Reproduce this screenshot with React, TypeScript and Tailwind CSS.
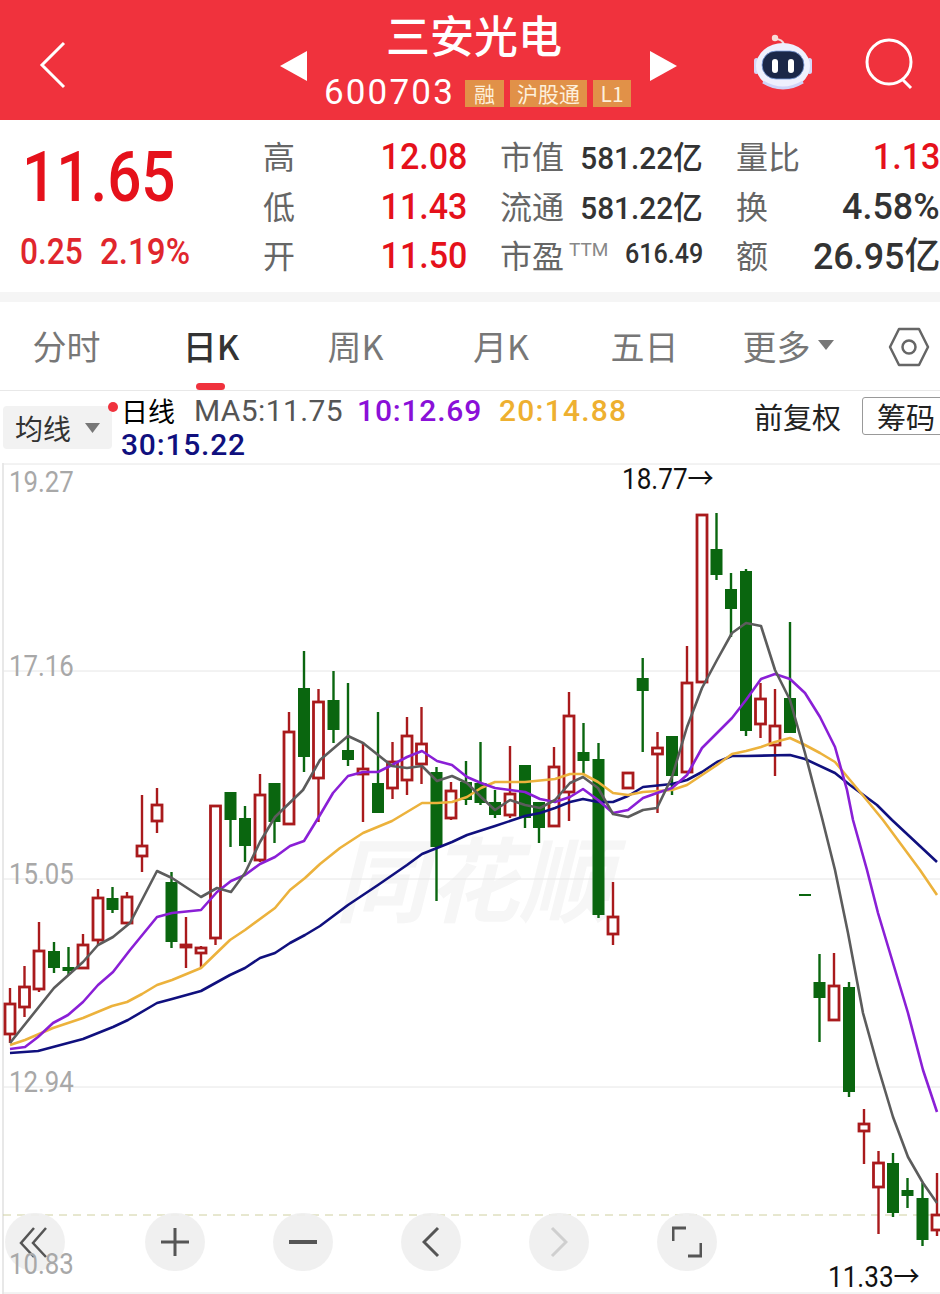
import React from "react";

type C = [number, number, number, number, number, "r" | "g"];
const candles: C[] = [
  [10, 988, 1043, 1004, 1034, "r"], [24.5, 966, 1017, 987, 1007, "r"], [39, 922, 992, 951, 989, "r"], [54, 942, 973, 951, 968, "g"],
  [68.5, 947, 975, 967, 971, "g"], [83, 934, 968, 945, 968, "r"], [98, 889, 945, 898, 940, "r"], [112.5, 887, 913, 898, 910, "g"],
  [127, 892, 923, 897, 923, "r"], [142, 795, 872, 846, 856, "r"], [157, 788, 833, 805, 821, "r"], [171.5, 872, 948, 882, 942, "g"],
  [186, 917, 968, 945, 947, "r"], [201, 946, 968, 948, 953, "r"], [215.5, 806, 945, 806, 938, "r"], [230.5, 792, 847, 792, 820, "g"],
  [245, 806, 862, 818, 846, "g"], [260, 774, 862, 795, 860, "r"], [274.5, 783, 843, 783, 822, "g"], [289, 712, 824, 732, 824, "r"],
  [304, 651, 772, 688, 757, "g"], [318.5, 689, 822, 702, 778, "r"], [333.5, 671, 743, 700, 730, "g"], [348, 683, 766, 750, 760, "g"],
  [363, 742, 822, 769, 774, "r"], [378, 712, 813, 783, 813, "g"], [392.5, 742, 799, 762, 788, "r"], [407, 717, 795, 736, 780, "r"],
  [421.5, 707, 784, 744, 764, "r"], [436.5, 767, 901, 772, 847, "g"], [451, 782, 820, 791, 818, "r"], [466, 761, 805, 782, 800, "g"],
  [480.5, 742, 805, 783, 803, "g"], [495, 790, 818, 802, 815, "g"], [510, 746, 818, 794, 815, "r"], [525, 765, 828, 765, 818, "g"],
  [539, 802, 843, 802, 828, "g"], [554, 747, 826, 767, 826, "r"], [569, 692, 821, 716, 792, "r"], [583.5, 723, 774, 752, 761, "g"],
  [598.5, 743, 918, 759, 915, "g"], [613, 882, 945, 917, 934, "r"], [628, 773, 788, 773, 788, "r"], [642.7, 658, 752, 678, 691, "g"],
  [657.5, 732, 813, 748, 754, "r"], [672, 736, 795, 736, 776, "g"], [687, 646, 772, 683, 772, "r"], [702, 515, 682, 515, 682, "r"],
  [716.5, 513, 580, 549, 575, "g"], [731, 573, 637, 589, 609, "g"], [746, 569, 736, 571, 731, "g"], [760.5, 683, 738, 699, 724, "r"],
  [775, 689, 776, 726, 745, "r"], [790, 622, 733, 698, 733, "g"], [805, 894, 896, 894, 896, "g"], [819.5, 954, 1042, 982, 998, "g"],
  [834, 953, 1020, 986, 1020, "r"], [849, 982, 1097, 987, 1092, "g"], [864, 1109, 1164, 1124, 1131, "r"], [878.5, 1151, 1234, 1163, 1187, "r"],
  [893, 1153, 1217, 1163, 1213, "g"], [907.5, 1178, 1208, 1190, 1196, "g"], [922.5, 1183, 1246, 1198, 1240, "g"], [937, 1173, 1236, 1215, 1230, "r"],
];

const ma5 = "10,1043 54,988 83,962 98,945 113,937 130,923 157,871 172,878 201,897 217,888 231,892 245,873 260,842 275,817 303,790 320,760 348,736 363,743 392,766 407,768 422,766 437,781 452,776 467,783 481,797 495,810 510,800 525,805 540,808 555,800 570,783 583,777 598,788 613,814 628,817 643,810 657,808 672,777 687,727 702,688 717,660 732,633 746,623 761,626 775,670 790,700 805,753 822,818 835,870 848,933 863,1013 878,1067 893,1117 908,1157 923,1183 937,1203";
const ma10 = "10,1049 25,1047 38,1037 53,1023 68,1015 83,1002 98,985 113,972 130,950 157,917 172,913 201,910 217,892 231,881 245,875 260,864 275,857 290,846 304,841 320,815 333,793 348,776 363,772 378,772 392,765 407,757 422,751 437,761 452,765 467,777 481,783 495,788 510,790 525,792 540,799 555,802 570,797 583,789 598,800 613,813 628,810 643,798 657,793 672,788 687,775 702,748 717,733 732,718 746,700 761,679 775,674 790,679 805,693 820,717 835,747 847,790 853,820 867,870 878,913 893,963 908,1013 923,1070 937,1112";
const ma20 = "10,1045 25,1040 53,1028 83,1018 112,1006 127,1002 142,994 157,985 172,980 201,968 230,940 245,930 275,908 290,890 305,878 320,864 340,848 363,833 392,821 422,803 437,803 452,802 467,797 481,788 495,782 525,782 555,779 570,774 583,774 598,782 613,793 628,795 643,792 672,790 687,785 702,775 717,765 732,754 746,751 761,747 775,742 790,738 805,745 820,753 835,762 850,780 865,798 883,820 920,870 937,895";
const ma30 = "10,1053 38,1051 53,1047 83,1039 113,1027 128,1020 157,1003 172,999 201,991 230,975 245,968 260,958 275,953 290,943 305,935 320,926 348,905 378,885 407,865 422,854 452,842 467,835 495,826 525,816 540,813 555,808 570,802 583,799 598,802 613,802 628,796 643,787 672,784 687,780 702,772 717,762 732,756 746,756 790,755 805,759 835,773 850,785 877,805 892,820 937,862";

const roboto = "font-['Roboto',sans-serif]";
const cjk = "font-['Noto_Sans_CJK_SC',sans-serif]";

function Chart() {
  return (
    <svg className="block relative" width={940} height={831} viewBox="0 463 940 831">
      <rect x={2} y={463} width={2} height={831} fill="#e8e8e8" />
      {[464, 671, 879, 1087, 1293].map((y) => (
        <line key={y} x1={3} x2={940} y1={y} y2={y} stroke="#e6e6e6" strokeWidth={1} />
      ))}
      <line x1={3} x2={940} y1={1215} y2={1215} stroke="#cfd0a0" strokeWidth={1} strokeDasharray="8 6" />
      {candles.map(([x, wt, wb, bt, bb, c], i) => {
        const col = c === "r" ? "#a91a1c" : "#0a660f";
        return (
          <g key={i}>
            <line x1={x} x2={x} y1={wt} y2={bt} stroke={col} strokeWidth={2.4} />
            <line x1={x} x2={x} y1={bb} y2={wb} stroke={col} strokeWidth={2.4} />
            {c === "r" ? (
              <rect x={x - 5} y={bt} width={10} height={bb - bt} fill="#fff" stroke={col} strokeWidth={2.8} />
            ) : (
              <rect x={x - 6} y={bt} width={12} height={bb - bt} fill={col} />
            )}
          </g>
        );
      })}
      <polyline points={ma30} fill="none" stroke="#10107e" strokeWidth={2.6} strokeLinejoin="round" />
      <polyline points={ma20} fill="none" stroke="#ecb23c" strokeWidth={2.6} strokeLinejoin="round" />
      <polyline points={ma10} fill="none" stroke="#8a1fd6" strokeWidth={2.6} strokeLinejoin="round" />
      <polyline points={ma5} fill="none" stroke="#5c5c5c" strokeWidth={2.6} strokeLinejoin="round" />
    </svg>
  );
}

function Robot() {
  return (
    <svg width={60} height={58} viewBox="0 0 60 58" className="shrink-0">
      <path d="M22 5 C26 5 30 6 31 11" fill="none" stroke="#f3dada" strokeWidth={2} />
      <circle cx={22} cy={4} r={3.2} fill="#f8dcd8" />
      <rect x={1} y={24} width={5} height={16} rx={2.5} fill="#d5d8f8" />
      <rect x={54} y={24} width={5} height={16} rx={2.5} fill="#d5d8f8" />
      <ellipse cx={30} cy={32} rx={27} ry={23} fill="#eef0fd" />
      <path d="M10 48 Q30 60 50 48" fill="none" stroke="#cfd4f8" strokeWidth={3} />
      <rect x={9} y={17} width={42} height={28} rx={14} fill="#1b2748" stroke="#7fa0e0" strokeWidth={0.8} />
      <rect x={19} y={25} width={6} height={14} rx={3} fill="#fff" />
      <rect x={35} y={25} width={6} height={14} rx={3} fill="#fff" />
    </svg>
  );
}

function Btn({ children, extra = "" }: { children: React.ReactNode; extra?: string }) {
  return <div className={`w-[60px] h-[58px] rounded-full bg-[#eeeeee]/90 flex items-center justify-center shrink-0 ${extra}`}>{children}</div>;
}

function Badge({ children, w }: { children: React.ReactNode; w: string }) {
  return (
    <span className={`${w} h-[27px] bg-[#e19148] text-[#fdf0dc] text-[21px] leading-[27px] text-center ${cjk}`}>{children}</span>
  );
}

const redVal = `${roboto} text-[37px] font-medium text-[#e5111b] origin-right scale-x-[0.92] leading-[54px] whitespace-nowrap`;
const darkVal = `${roboto} text-[37px] font-medium text-[#333333] origin-right scale-x-[0.97] leading-[54px] whitespace-nowrap`;
const midVal = `${roboto} text-[32px] font-medium text-[#333333] origin-right scale-x-[0.93] leading-[54px] whitespace-nowrap -mt-[2px]`;
const axisLabel = `${roboto} absolute left-[9px] text-[30px] leading-[34px] text-[#a8a8a8] origin-left scale-x-[0.86]`;

export default function App() {
  return (
    <div className={`w-[940px] h-[1294px] overflow-hidden bg-white ${cjk}`}>
      <header className="h-[120px] bg-[#f0323d] flex items-center relative text-white">
        <svg width={30} height={50} viewBox="0 0 30 50" className="ml-[38px] shrink-0 mt-[10px]">
          <path d="M26 3 L4 25 L26 47" fill="none" stroke="#fff" strokeWidth={3} />
        </svg>
        <svg width={30} height={32} viewBox="0 0 30 32" className="ml-[211px] shrink-0 mt-[12px]">
          <path d="M28 1 V31 L1 16 Z" fill="#fff" />
        </svg>
        <div className="w-[344px] flex flex-col items-center shrink-0">
          <div className="text-[44px] font-medium leading-[50px] ml-[-14px]">三安光电</div>
          <div className="flex items-center h-[36px] mt-[16px] ml-[-7px]">
            <span className={`${roboto} text-[35px] leading-[36px] tracking-[2.2px] mr-[10px]`}>600703</span>
            <div className="flex gap-[6px]">
              <Badge w="w-[39px]">融</Badge>
              <Badge w="w-[77px]">沪股通</Badge>
              <Badge w="w-[38px]">L1</Badge>
            </div>
          </div>
        </div>
        <svg width={30} height={32} viewBox="0 0 30 32" className="shrink-0 mt-[12px] ml-[-4px]">
          <path d="M1 1 V31 L28 16 Z" fill="#fff" />
        </svg>
        <div className="ml-[74px] mt-[6px]"><Robot /></div>
        <svg width={52} height={52} viewBox="0 0 52 52" className="ml-[51px] shrink-0 mt-[8px]">
          <circle cx={25} cy={24} r={22} fill="none" stroke="#fff" strokeWidth={3} />
          <path d="M38 41 L47 50" stroke="#fff" strokeWidth={3} />
        </svg>
      </header>

      <section className="h-[172px] flex">
        <div className="w-[263px] shrink-0 pl-[20px] text-[#e5111b]">
          <div className={`${roboto} text-[70px] leading-[70px] mt-[22px] ml-[2px] font-medium inline-block origin-left scale-x-[0.86] whitespace-nowrap`}>11.65</div>
          <div className={`${roboto} text-[36px] font-medium leading-[40px] mt-[20px] flex gap-[20px] text-[#e0262d]`}>
            <span className="inline-block origin-left scale-x-[0.88] w-[60px]">0.25</span>
            <span className="inline-block origin-left scale-x-[0.92] whitespace-nowrap">2.19%</span>
          </div>
        </div>
        <div className="grid grid-cols-[204px_203px_204px] gap-x-[33px] grid-rows-[50px_49px_49px] pt-[10px] text-[#666666] text-[32px] leading-[50px]">
          <div className="flex justify-between"><span>高</span><span className={redVal}>12.08</span></div>
          <div className="flex justify-between"><span>市值</span><span className={midVal}>581.22<span className={cjk}>亿</span></span></div>
          <div className="flex justify-between"><span>量比</span><span className={redVal}>1.13</span></div>
          <div className="flex justify-between"><span>低</span><span className={redVal}>11.43</span></div>
          <div className="flex justify-between"><span>流通</span><span className={midVal}>581.22<span className={cjk}>亿</span></span></div>
          <div className="flex justify-between"><span>换</span><span className={darkVal}>4.58%</span></div>
          <div className="flex justify-between"><span>开</span><span className={redVal}>11.50</span></div>
          <div className="flex items-center">
            <span>市盈</span>
            <span className={`${roboto} text-[19px] text-[#888888] ml-[5px] -mt-[8px] leading-[30px]`}>TTM</span>
            <span className={`${roboto} text-[#333333] font-medium text-[27px] ml-auto origin-right scale-x-[0.93]`}>616.49</span>
          </div>
          <div className="flex justify-between"><span>额</span><span className={`${darkVal} -mt-[3px]`}>26.95<span className={cjk}>亿</span></span></div>
        </div>
      </section>

      <div className="h-[10px] bg-[#f5f5f5]" />

      <nav className="h-[89px] flex items-center border-b border-[#e8e8e8] text-[34px] text-[#777777] -ml-[6px] pb-[2px]">
        <div className="w-[145px] text-center">分时</div>
        <div className="w-[146px] text-center text-[#333333] font-medium relative h-full flex items-center justify-center -translate-x-[1px]">
          <span>日K</span>
          <span className="absolute left-[58px] bottom-[-2px] w-[29px] h-[7px] rounded-full bg-[#f0323d]" />
        </div>
        <div className="w-[143px] text-center -translate-x-[1px]">周K</div>
        <div className="w-[146px] text-center">月K</div>
        <div className="w-[141px] text-center">五日</div>
        <div className="w-[146px] flex items-center justify-center">
          <span>更多</span>
          <svg width={16} height={10} viewBox="0 0 16 10" className="ml-[7px]"><path d="M0 0 H16 L8 10 Z" fill="#777777" /></svg>
        </div>
        <svg width={42} height={40} viewBox="0 0 42 40" className="ml-[27px] shrink-0 mt-[4px]">
          <path d="M11 2 H31 L40 20 L31 38 H11 L2 20 Z" fill="none" stroke="#666666" strokeWidth={2.5} strokeLinejoin="round" />
          <circle cx={21} cy={20} r={6.5} fill="none" stroke="#666666" strokeWidth={2.5} />
        </svg>
      </nav>

      <div className="h-[72px] flex relative">
        <div className="w-[109px] h-[43px] ml-[3px] mt-[15px] bg-[#f2f2f2] rounded-[4px] flex items-center pl-[12px] text-[28px] text-[#333333] shrink-0">
          <span>均线</span>
          <svg width={15} height={10} viewBox="0 0 15 10" className="ml-[14px]"><path d="M0 0 H15 L7.5 10 Z" fill="#777777" /></svg>
        </div>
        <span className="absolute left-[108px] top-[11px] w-[10px] h-[10px] rounded-full bg-[#f0323d]" />
        <div className={`${roboto} text-[30px] font-medium leading-[34px] ml-[9px] mt-[3px] w-[520px] shrink-0`}>
          <div className="flex whitespace-nowrap">
            <span className={`${cjk} text-[27px] text-black font-normal mr-[19px]`}>日线</span>
            <span className="text-[#555555] font-normal tracking-[0.4px] mr-[14px]">MA5:11.75</span>
            <span className="text-[#8a10d8] mr-[17px] tracking-[0.8px]">10:12.69</span>
            <span className="text-[#eeb030] tracking-[1.2px]">20:14.88</span>
          </div>
          <div className="text-[#10107e] tracking-[0.8px]">30:15.22</div>
        </div>
        <div className="ml-[113px] mt-[6px] text-[29px] leading-[38px] text-[#222222] flex whitespace-nowrap">
          <span className="h-[38px] w-[108px]">前复权</span>
          <span className="h-[38px] pl-[14px] pr-[10px] border border-[#999999] rounded-[3px] leading-[36px]">筹码</span>
        </div>
      </div>

      <div className="relative">
        <div className={`absolute left-[335px] top-[362px] text-[92px] leading-[100px] italic text-[#f6f6f6] ${cjk} font-bold whitespace-nowrap`}>同花顺</div>
        <Chart />
        <span className={`${axisLabel} top-[2px]`}>19.27</span>
        <span className={`${axisLabel} top-[186px]`}>17.16</span>
        <span className={`${axisLabel} top-[394px]`}>15.05</span>
        <span className={`${axisLabel} top-[602px]`}>12.94</span>
        <span className={`${roboto} absolute left-[622px] top-[-1px] text-[29px] leading-[30px] text-[#111111] origin-left scale-x-[0.9] whitespace-nowrap`}>18.77<span className={`${cjk} leading-none`}>→</span></span>
        <span className={`${roboto} absolute left-[828px] top-[797px] text-[29px] leading-[30px] text-[#111111] origin-left scale-x-[0.9] whitespace-nowrap`}>11.33<span className={`${cjk} leading-none`}>→</span></span>
        <div className="absolute left-[5px] top-[750px] flex gap-[68px] text-[#555555]">
          <Btn extra="mr-[12px]">
            <svg width={32} height={32} viewBox="0 0 32 32"><path d="M15 2 L2 17 L15 31 M27 2 L14 17 L27 31" fill="none" stroke="#555555" strokeWidth={2.5} /></svg>
          </Btn>
          <Btn>
            <svg width={30} height={30} viewBox="0 0 30 30"><path d="M15 1 V29 M1 15 H29" fill="none" stroke="#555555" strokeWidth={3} /></svg>
          </Btn>
          <Btn>
            <svg width={30} height={30} viewBox="0 0 30 30"><path d="M1 15 H29" fill="none" stroke="#555555" strokeWidth={4} /></svg>
          </Btn>
          <Btn>
            <svg width={18} height={32} viewBox="0 0 18 32"><path d="M16 2 L2 16 L16 30" fill="none" stroke="#555555" strokeWidth={3} /></svg>
          </Btn>
          <Btn>
            <svg width={18} height={32} viewBox="0 0 18 32"><path d="M2 2 L16 16 L2 30" fill="none" stroke="#cfcfcf" strokeWidth={3} /></svg>
          </Btn>
          <Btn>
            <svg width={30} height={32} viewBox="0 0 30 32"><path d="M1 15 V2 H14 M29 17 V30 H16" fill="none" stroke="#555555" strokeWidth={3} /></svg>
          </Btn>
        </div>
        <span className={`${axisLabel} top-[784px]`}>10.83</span>
      </div>
    </div>
  );
}
